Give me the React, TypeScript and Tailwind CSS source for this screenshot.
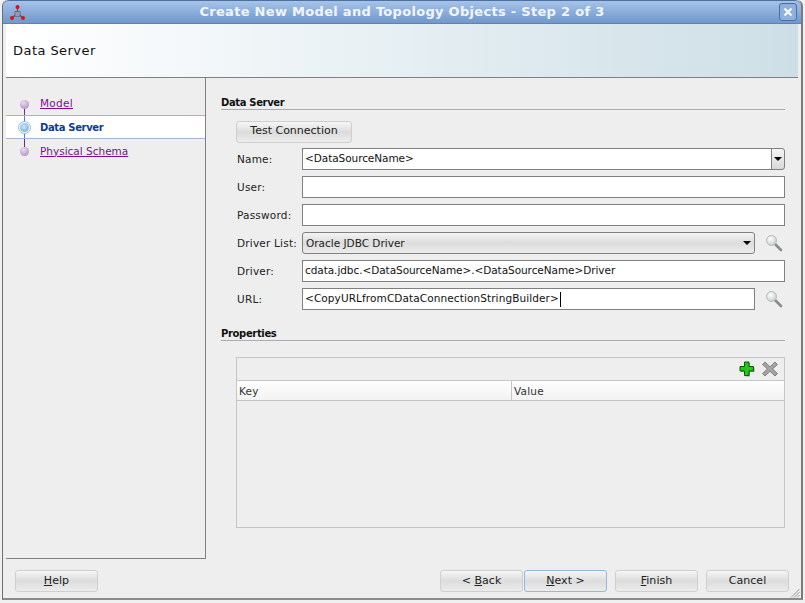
import type { ReactNode } from "react";

const FONT = "font-['DejaVu_Sans',sans-serif]";

function Btn({ children, focus, className = "" }: { children: ReactNode; focus?: boolean; className?: string }) {
  return (
    <div
      className={`flex h-[22px] w-[83px] items-center justify-center rounded-[3px] border bg-gradient-to-b from-[#f6f6f6] via-[#dcdcdc] to-[#ececec] text-[11px] tracking-[0.05px] text-[#222] ${focus ? "border-[#8fb8e6]" : "border-[#cfcfcf]"} ${className}`}
    >
      {children}
    </div>
  );
}

function Row({ label, children }: { label: string; children: ReactNode }) {
  return (
    <div className="flex h-[22px] items-center">
      <div className="w-[65px] pt-[2px] text-[10.5px] tracking-[0.2px] text-[#222]">{label}</div>
      {children}
    </div>
  );
}

function Input({ children, className = "" }: { children?: ReactNode; className?: string }) {
  return (
    <div className={`flex h-[22px] items-center border border-[#808080] bg-white pl-[2px] text-[10.5px] tracking-[-0.06px] text-[#111] ${className}`}>
      {children}
    </div>
  );
}

function Lens() {
  return (
    <svg width="18" height="18" viewBox="0 0 18 18" className="ml-[10px]">
      <defs>
        <radialGradient id="gl" cx="0.4" cy="0.35" r="0.7">
          <stop offset="0" stopColor="#ffffff" />
          <stop offset="1" stopColor="#c4cccc" />
        </radialGradient>
      </defs>
      <line x1="10.5" y1="10.5" x2="16" y2="16" stroke="#8b8b86" strokeWidth="2.6" strokeLinecap="round" />
      <circle cx="6.5" cy="6.5" r="5" fill="url(#gl)" stroke="#b4baba" strokeWidth="1" />
    </svg>
  );
}

function Heading({ children }: { children: ReactNode }) {
  return (
    <div className="h-[15px] border-b border-[#a9acb2] pt-px text-[10px] leading-[13px] font-bold tracking-[-0.35px] text-[#111]">{children}</div>
  );
}

function Bullet() {
  return <span className="h-[9px] w-[9px] rounded-full bg-[radial-gradient(circle_at_40%_30%,#eadcf0,#a77fbb)]" />;
}

export default function App() {
  return (
    <div className={`h-[603px] w-[805px] overflow-hidden bg-[#f0f0f0] pl-[2px] ${FONT}`}>
      <div className="flex h-[600px] w-[801px] flex-col rounded-t-[6px] border-b-2 border-l border-r-2 border-b-[#8a8a8a] border-l-[#6f6f6f] border-r-[#7a7a7a] bg-[#eeeeee] pr-[3px] pl-[3px]">
        {/* title bar */}
        <div className="relative -mr-[3px] -ml-[3px] flex h-[24px] shrink-0 items-center justify-center rounded-t-[6px] border-t border-b border-t-[#4f6f9f] border-b-[#5f82b4] bg-gradient-to-b from-[#a6c3e8] to-[#7098cc]">
          <svg width="18" height="18" viewBox="0 0 18 18" className="absolute top-[3px] left-[6px]">
            <path d="M8.5 3 V9 L3 14 M8.5 9 L14 14" stroke="#555" strokeWidth="1.2" fill="none" />
            <rect x="6" y="7.5" width="5" height="5" fill="#9a9ab4" stroke="#555566" strokeWidth="0.6" />
            <circle cx="8.5" cy="3" r="2" fill="#e01010" />
            <circle cx="3" cy="14" r="2" fill="#e01010" />
            <circle cx="14" cy="14" r="2" fill="#e01010" />
          </svg>
          <span className="text-[13px] font-bold tracking-[0.3px] text-[#f1f5fb]">
            Create New Model and Topology Objects - Step 2 of 3
          </span>
          <div className="absolute top-[2px] right-[4px] flex h-[18px] w-[18px] items-center justify-center rounded-[3px] border border-[#4b6c9e] bg-[#8fb0dc]">
            <svg width="10" height="10" viewBox="0 0 10 10">
              <path d="M1.5 1.5 L8.5 8.5 M8.5 1.5 L1.5 8.5" stroke="#f4f7fb" strokeWidth="2.4" />
            </svg>
          </div>
        </div>

        {/* page header */}
        <div className="flex h-[54px] shrink-0 items-center border-b border-[#808080] bg-gradient-to-r from-white to-[#cddfe6] pl-[7px] text-[13px] tracking-[0.45px] text-[#111]">
          Data Server
        </div>

        <div className="flex min-h-0 flex-1">
          {/* train */}
          <div className="relative h-[481px] w-[200px] shrink-0 border-r border-b border-[#808080] bg-[#eeeeee] pt-[14px]">
            <div className="absolute top-[30px] left-[18px] h-[40px] w-[1px] bg-[#7d1f9c]" />
            <div className="flex h-[23px] items-center pt-px text-[10.5px] tracking-[0.3px]">
              <span className="relative flex w-[34px] justify-center pl-[2px]"><Bullet /></span>
              <span className="text-[#7b0f8f] underline">Model</span>
            </div>
            <div className="relative flex h-[24px] items-center border-y border-[#a5b5cc] bg-white pt-px text-[10px] font-bold tracking-[-0.35px] text-[#0b3a94]">
              <div className="absolute top-0 left-[18px] h-[22px] w-[1px] bg-[#3f7fd6]" />
              <span className="relative flex w-[34px] justify-center pl-[2px]">
                <span className="flex h-[13px] w-[13px] items-center justify-center rounded-full border border-[#8fbce8] bg-white">
                  <span className="h-[9px] w-[9px] rounded-full bg-[radial-gradient(circle_at_45%_40%,#d2e6fa,#5a9fe0)]" />
                </span>
              </span>
              Data Server
            </div>
            <div className="flex h-[24px] items-center pt-px text-[10.5px]">
              <span className="relative flex w-[34px] justify-center pl-[2px]"><Bullet /></span>
              <span className="text-[#7b0f8f] underline">Physical Schema</span>
            </div>
          </div>

          {/* content */}
          <div className="flex min-w-0 flex-1 flex-col pt-[17px] pr-[13px] pl-[15px]">
            <Heading>Data Server</Heading>
            <div className="mt-[11px] ml-[15px] flex h-[22px] w-[116px] items-center justify-center rounded-[3px] border border-[#cfcfcf] bg-gradient-to-b from-[#f6f6f6] via-[#dcdcdc] to-[#ececec] pb-[2px] text-[11px] text-[#222]">
              Test Connection
            </div>

            <div className="mt-[5px] ml-[16px] flex flex-col gap-[6px]">
              <Row label="Name:">
                <Input className="flex-1">&lt;DataSourceName&gt;</Input>
                <div className="-ml-px flex h-[22px] w-[14px] items-center justify-center rounded-r-[3px] border border-[#808080] bg-gradient-to-b from-[#f6f6f6] to-[#d8d8d8]">
                  <span className="h-0 w-0 border-x-[4px] border-t-[4px] border-x-transparent border-t-black" />
                </div>
              </Row>
              <Row label="User:"><Input className="flex-1" /></Row>
              <Row label="Password:"><Input className="flex-1" /></Row>
              <Row label="Driver List:">
                <div className="flex h-[22px] w-[453px] items-center justify-between rounded-[3px] border border-[#808080] bg-gradient-to-b from-[#f4f4f4] via-[#dcdcdc] to-[#ececec] pr-[3px] pl-[3px] text-[10.5px] text-[#222]">
                  <span className="pt-[2px]">Oracle JDBC Driver</span>
                  <span className="h-0 w-0 border-x-[4px] border-t-[4px] border-x-transparent border-t-black" />
                </div>
                <Lens />
              </Row>
              <Row label="Driver:">
                <Input className="flex-1">cdata.jdbc.&lt;DataSourceName&gt;.&lt;DataSourceName&gt;Driver</Input>
              </Row>
              <Row label="URL:">
                <Input className="w-[453px] tracking-[0.1px]">
                  &lt;CopyURLfromCDataConnectionStringBuilder&gt;
                  <span className="ml-px h-[15px] w-px bg-black" />
                </Input>
                <Lens />
              </Row>
            </div>

            <div className="mt-[16px]">
              <Heading>Properties</Heading>
            </div>

            {/* properties table */}
            <div className="mt-[16px] ml-[15px] flex h-[171px] flex-col border border-[#c6c6c6]">
              <div className="flex h-[22px] shrink-0 items-center justify-end gap-[7px] pr-[6px]">
                <svg width="16" height="16" viewBox="0 0 16 16">
                  <path d="M6.5 2 H11 V6.5 H15.5 V11 H11 V15.5 H6.5 V11 H2 V6.5 H6.5 Z" fill="#9a9a9a" />
                  <path d="M5.5 1 H10 V5.5 H14.5 V10 H10 V14.5 H5.5 V10 H1 V5.5 H5.5 Z" fill="#22c714" stroke="#0c5c0c" strokeWidth="1" />
                </svg>
                <svg width="16" height="16" viewBox="0 0 16 16">
                  <path d="M3 1 L8 5.8 L13 1 L15.5 3.5 L10.5 8 L15.5 12.5 L13 15 L8 10.2 L3 15 L0.5 12.5 L5.5 8 L0.5 3.5 Z" fill="#a5a5a5" stroke="#6e6e6e" strokeWidth="0.8" />
                </svg>
              </div>
              <div className="flex h-[21px] shrink-0 border-y border-[#c6c6c6] bg-gradient-to-b from-white to-[#f2f2f2] pt-[2px] text-[10.5px] tracking-[0.2px] text-[#333]">
                <div className="flex w-[274px] items-center pl-[2px]">Key</div>
                <div className="-mt-[2px] w-px bg-[#c6c6c6]" />
                <div className="flex flex-1 items-center pl-[2px]">Value</div>
              </div>
            </div>
          </div>
        </div>

        {/* footer buttons */}
        <div className="relative flex h-[39px] shrink-0 items-start pt-[11px] pr-[9px] pl-[9px]">
          <Btn><span><u>H</u>elp</span></Btn>
          <div className="ml-auto flex">
            <Btn className="mr-px">&lt;&nbsp;<u>B</u>ack</Btn>
            <Btn focus><span><u>N</u>ext &gt;</span></Btn>
            <Btn className="ml-[8px]"><span><u>F</u>inish</span></Btn>
            <Btn className="ml-[8px]">Cancel</Btn>
          </div>
          <svg width="10" height="10" viewBox="0 0 10 10" className="absolute -right-[2px] bottom-0">
            <path d="M9.5 1 L1 9.5 M9.5 4 L4 9.5 M9.5 7 L7 9.5" stroke="#9a9a9a" strokeWidth="1" />
          </svg>
        </div>
      </div>
    </div>
  );
}
